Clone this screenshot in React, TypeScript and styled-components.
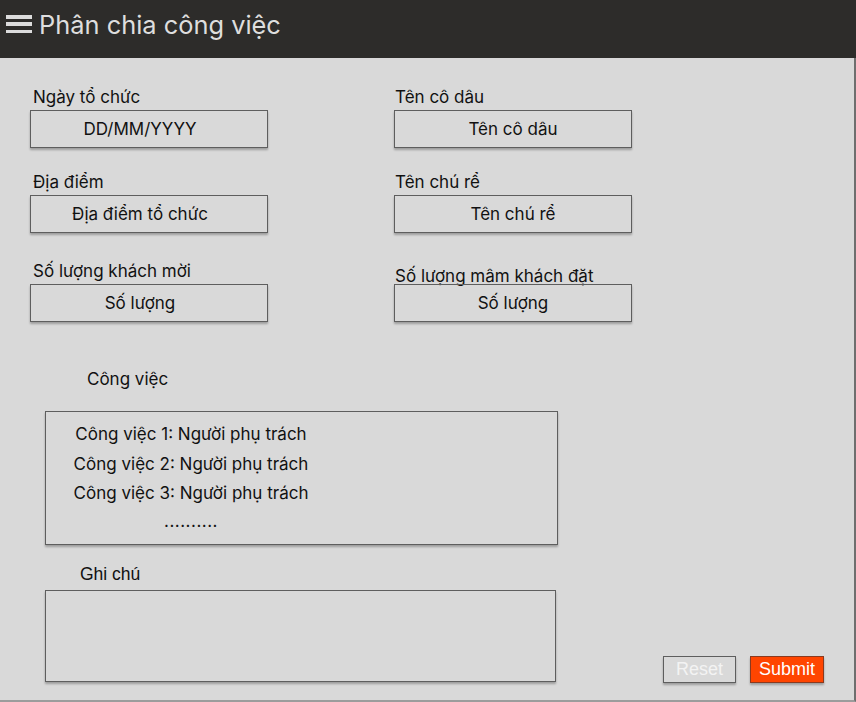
import React from "react";
import styled, { createGlobalStyle } from "styled-components";

const Global = createGlobalStyle`
  html, body { margin: 0; padding: 0; background: #d9d9d9; }
  body { font-family: Inter, "Noto Sans", sans-serif; color: #111; }
  * { box-sizing: border-box; }
`;

const Page = styled.div`
  width: 856px;
  height: 702px;
  display: flex;
  flex-direction: column;
  background: #d9d9d9;
`;

const Header = styled.header`
  height: 58px;
  flex: none;
  background: #2d2c2a;
  display: flex;
  align-items: center;
  gap: 7px;
  padding: 0 0 10px 6px;
`;

const Burger = styled.div`
  width: 26px;
  height: 18px;
  display: flex;
  flex-direction: column;
  justify-content: space-between;
  & > span {
    display: block;
    height: 3.5px;
    background: #dcdcdc;
  }
`;

const Title = styled.h1`
  margin: 0;
  font-size: 25.4px;
  font-weight: 400;
  color: #dedede;
`;

const Main = styled.main`
  flex: 1;
  display: flex;
  flex-direction: column;
  border-right: 2px solid #6e6e6e;
  border-bottom: 2px solid #9c9c9c;
  padding: 30px 0 17px 30px;
`;

const FieldGrid = styled.div`
  display: grid;
  grid-template-columns: 238px 238px;
  column-gap: 126px;
  row-gap: 25px;
  & > :nth-child(n + 5) {
    margin-top: 4px;
  }
`;

const Field = styled.div`
  display: flex;
  flex-direction: column;
`;

const Label = styled.label<{ $drop?: boolean; $right?: boolean }>`
  font-size: 17px;
  line-height: 22px;
  padding-left: ${(p) => (p.$right ? "1px" : "3px")};
  margin-top: ${(p) => (p.$drop ? "3px" : "-2px")};
  margin-bottom: ${(p) => (p.$drop ? "-3px" : "2px")};
`;

const InputBox = styled.div<{ $left?: boolean }>`
  height: 38px;
  border: 1px solid #5e5e5e;
  box-shadow: 0 2px 2px rgba(0, 0, 0, 0.28);
  display: flex;
  align-items: center;
  justify-content: center;
  font-size: 17px;
  padding-right: ${(p) => (p.$left ? "18px" : "0")};
`;

const Section = styled.section`
  display: flex;
  flex-direction: column;
  margin-left: 15px;
`;

const SectionLabel = styled.div<{ $indent: number }>`
  font-size: 17px;
  line-height: 22px;
  padding-left: ${(p) => p.$indent}px;
`;

const TaskBox = styled.div`
  width: 513px;
  height: 134px;
  margin-top: 21px;
  border: 1px solid #5e5e5e;
  box-shadow: 0 2px 2px rgba(0, 0, 0, 0.28);
  padding-top: 7px;
`;

const TaskList = styled.ul`
  list-style: none;
  margin: 0;
  padding: 0;
  width: 290px;
  text-align: center;
`;

const TaskItem = styled.li<{ $dots?: boolean }>`
  font-size: 17px;
  line-height: 30px;
  height: ${(p) => (p.$dots ? "26px" : "29.5px")};
  margin-top: ${(p) => (p.$dots ? "-2px" : "0")};
  letter-spacing: ${(p) => (p.$dots ? "0.5px" : "0")};
`;

const BottomRow = styled.div`
  display: flex;
  align-items: flex-end;
  margin-top: 18px;
`;

const NoteLabel = styled.div`
  font-family: "Liberation Sans", Arial, sans-serif;
  font-size: 17.5px;
  line-height: 22px;
  padding-left: 35px;
`;

const NoteBox = styled.div`
  width: 511px;
  height: 92px;
  margin-top: 5px;
  border: 1px solid #5e5e5e;
  box-shadow: 0 2px 2px rgba(0, 0, 0, 0.28);
`;

const Buttons = styled.div`
  display: flex;
  gap: 14px;
  margin-left: auto;
  margin-right: 30px;
  margin-bottom: -1px;
`;

const Button = styled.button<{ $primary?: boolean }>`
  width: ${(p) => (p.$primary ? "74px" : "73px")};
  height: 27px;
  padding: 0;
  font-family: "Liberation Sans", Arial, sans-serif;
  font-size: 18px;
  color: ${(p) => (p.$primary ? "#ffffff" : "#f3f3f3")};
  background: ${(p) => (p.$primary ? "#ff4500" : "#d9d9d9")};
  border: 1px solid ${(p) => (p.$primary ? "#8a3a20" : "#5e5e5e")};
  box-shadow: 0 2px 2px rgba(0, 0, 0, 0.28);
`;

const fields = [
  { label: "Ngày tổ chức", value: "DD/MM/YYYY", left: true },
  { label: "Tên cô dâu", value: "Tên cô dâu" },
  { label: "Địa điểm", value: "Địa điểm tổ chức", left: true },
  { label: "Tên chú rể", value: "Tên chú rể" },
  { label: "Số lượng khách mời", value: "Số lượng", left: true },
  { label: "Số lượng mâm khách đặt", value: "Số lượng", drop: true },
];

export default function App() {
  return (
    <>
      <Global />
      <Page>
        <Header>
          <Burger>
            <span />
            <span />
            <span />
          </Burger>
          <Title>Phân chia công việc</Title>
        </Header>
        <Main>
          <FieldGrid>
            {fields.map((f) => (
              <Field key={f.label}>
                <Label $drop={f.drop} $right={!f.left}>
                  {f.label}
                </Label>
                <InputBox $left={f.left}>{f.value}</InputBox>
              </Field>
            ))}
          </FieldGrid>
          <Section style={{ marginTop: 46 }}>
            <SectionLabel $indent={42}>Công việc</SectionLabel>
            <TaskBox>
              <TaskList>
                <TaskItem>Công việc 1: Người phụ trách</TaskItem>
                <TaskItem>Công việc 2: Người phụ trách</TaskItem>
                <TaskItem>Công việc 3: Người phụ trách</TaskItem>
                <TaskItem $dots>..........</TaskItem>
              </TaskList>
            </TaskBox>
          </Section>
          <BottomRow>
            <Section>
              <NoteLabel>Ghi chú</NoteLabel>
              <NoteBox />
            </Section>
            <Buttons>
              <Button>Reset</Button>
              <Button $primary>Submit</Button>
            </Buttons>
          </BottomRow>
        </Main>
      </Page>
    </>
  );
}
